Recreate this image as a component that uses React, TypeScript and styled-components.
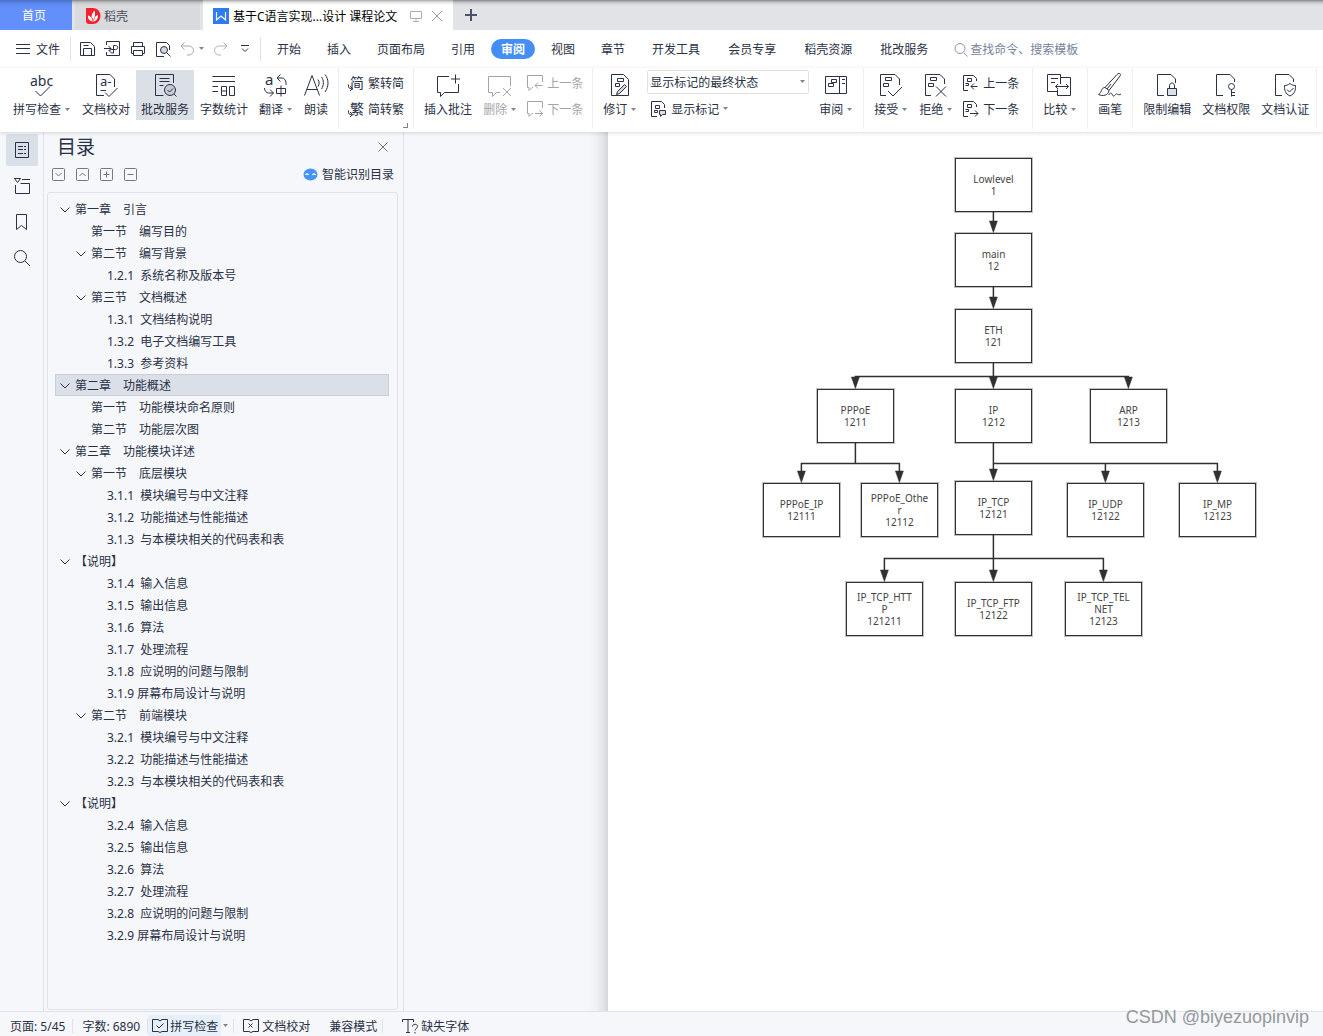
import React from "react";
import styled, { createGlobalStyle, css } from "styled-components";

const ink = "#2a3045";
const line = "#dfe2e8";
const panel = "#f5f7fa";

const Global = createGlobalStyle`
  * { box-sizing: border-box; }
  body { margin: 0; background: ${panel}; }
  body, button, input, select {
    font-family: "Noto Sans", "Noto Sans CJK SC", sans-serif;
    font-size: 12px;
    color: ${ink};
  }
  button { padding: 0; border: 0; background: none; white-space: nowrap; }
  svg { display: block; flex: none; }
`;

const Shell = styled.div`
  display: flex;
  flex-direction: column;
  height: 100vh;
  min-width: 0;
  overflow: hidden;
`;

/* ---------- window tabs ---------- */
const TabBar = styled.header`
  display: flex;
  gap: 3px;
  height: 30px;
  flex: none;
  background: linear-gradient(#858688, #bdbec1 2px, #d8d9dc 4px, #e1e3e7 6px);
`;
const HomeTab = styled.button`
  width: 72px;
  padding-right: 4px;
  color: #fff;
  background: linear-gradient(#4a70c4, #5b88f3 4px, #628ffa 8px);
`;
const FileTab = styled.div<{ $active?: boolean }>`
  display: flex;
  align-items: center;
  gap: ${(p) => (p.$active ? 4 : 3)}px;
  padding: 2px 10px 0;
  width: ${(p) => (p.$active ? 250 : 125)}px;
  color: ${(p) => (p.$active ? "#000" : "#4a4d55")};
  background: ${(p) =>
    p.$active
      ? "linear-gradient(#a5a5a5, #dedede 2px, #f7f7f7 4px, #fff 6px)"
      : "linear-gradient(#858688, #b9babc 2px, #d0d1d4 4px, #d8dadd 6px)"};
`;
const TabTitle = styled.span`
  flex: 1;
  white-space: nowrap;
`;
const TabTools = styled.span`
  display: flex;
  align-items: center;
  gap: 9px;
`;
const AddTab = styled.button`
  width: 30px;
  display: grid;
  place-items: center;
`;

/* ---------- menu row ---------- */
const MenuRow = styled.nav`
  display: flex;
  align-items: center;
  height: 38px;
  flex: none;
  background: #fff;
`;
const FileButton = styled.button`
  display: flex;
  align-items: center;
  gap: 6px;
  padding: 0 10px 0 16px;
  height: 24px;
  border-right: 1px solid ${line};
`;
const QuickTools = styled.div`
  display: flex;
  align-items: center;
  gap: 9px;
  height: 24px;
  padding: 0 7px 0 8px;
  border-right: 1px solid ${line};
  margin-right: 3px;
`;
const QuickButton = styled.button`
  display: flex;
  align-items: center;
  gap: 4px;
`;
const MenuItem = styled.button<{ $wide?: boolean }>`
  padding: 0 ${(p) => (p.$wide ? 14 : 13)}px;
  height: 20px;
`;
const ActiveItem = styled.button`
  width: 44px;
  height: 20px;
  margin: 0 3px;
  border-radius: 10px;
  background: #448ef4;
  color: #fff;
  font-weight: 700;
`;
const Search = styled.label`
  display: flex;
  align-items: center;
  flex: 1;
  gap: 1px;
  padding-left: 12px;
  min-width: 0;
`;
const SearchInput = styled.input`
  border: 0;
  padding: 0;
  flex: 1;
  min-width: 0;
  outline: 0;
  background: transparent;
  &::placeholder { color: #77839b; opacity: 1; }
`;

/* ---------- ribbon ---------- */
const Ribbon = styled.section`
  display: flex;
  height: 64px;
  flex: none;
  padding-left: 3px;
  background: #fff;
  position: relative;
  z-index: 2;
  box-shadow: 0 1px 4px rgba(0, 0, 0, 0.14);
`;
const Group = styled.div<{ $end?: number }>`
  display: flex;
  gap: 1px;
  height: 61px;
  padding: 2px ${(p) => p.$end ?? 5}px 0 5px;
  border-right: 1px solid #eceef1;
  position: relative;
`;
const dim = css`
  color: #a3a5aa;
`;
const BigButton = styled.button<{ $active?: boolean; $off?: boolean }>`
  display: flex;
  flex-direction: column;
  align-items: center;
  height: 50px;
  padding: 1px 5px;
  background: ${(p) => (p.$active ? "#dae0e6" : "transparent")};
  ${(p) => p.$off && dim}
  > svg { margin: 0 -2px; }
`;
const Label = styled.span`
  display: flex;
  align-items: center;
  line-height: 21px;
`;
const Stack = styled.div`
  display: flex;
  flex-direction: column;
`;
const SmallButton = styled.button<{ $off?: boolean }>`
  display: flex;
  align-items: center;
  gap: 4px;
  height: 26px;
  padding: 0 4px;
  ${(p) => p.$off && dim}
`;
const Launcher = styled.span`
  position: absolute;
  right: 5px;
  bottom: 1px;
  width: 5px;
  height: 5px;
  border: solid #7c8496;
  border-width: 0 1px 1px 0;
`;
const SelectBox = styled.div`
  display: flex;
  align-items: center;
  width: 162px;
  height: 24px;
  margin-bottom: 2px;
  padding-right: 2px;
  border: 1px solid ${line};
  border-radius: 2px;
`;
const Select = styled.select`
  appearance: none;
  flex: 1;
  border: 0;
  padding: 0 2px;
  background: transparent;
`;
const MarkupStack = styled(Stack)`
  margin: 0 4px;
`;

/* ---------- main area ---------- */
const Main = styled.main`
  display: flex;
  flex: 1;
  min-height: 0;
`;
const Rail = styled.nav`
  display: flex;
  flex-direction: column;
  gap: 4px;
  width: 44px;
  padding: 2px 5px 0 6px;
  border-right: 1px solid ${line};
`;
const RailButton = styled.button<{ $active?: boolean }>`
  display: grid;
  place-items: center;
  width: 32px;
  height: 32px;
  border-radius: 2px;
  background: ${(p) => (p.$active ? "#dae0e8" : "transparent")};
`;
const Outline = styled.aside`
  display: flex;
  flex-direction: column;
  width: 360px;
  padding: 0 5px 1px 3px;
  border-right: 1px solid ${line};
`;
const OutlineHead = styled.div`
  display: flex;
  justify-content: space-between;
  align-items: center;
  height: 30px;
  padding: 0 10px;
`;
const OutlineTitle = styled.h2`
  margin: 0;
  font-size: 19px;
  line-height: 28px;
  font-weight: 400;
`;
const OutlineTools = styled.div`
  display: flex;
  align-items: center;
  gap: 11px;
  height: 24px;
  padding: 0 4px 0 5px;
  margin-bottom: 6px;
`;
const SmartButton = styled.button`
  display: flex;
  align-items: center;
  gap: 4px;
  margin-left: auto;
`;
const Tree = styled.ul`
  flex: 1;
  min-height: 0;
  margin: 0;
  list-style: none;
  overflow: hidden;
  padding: 5px 8px 0 7px;
  border: 1px solid ${line};
  border-radius: 3px;
`;
const TreeRow = styled.button<{ $level: number; $selected?: boolean }>`
  display: flex;
  align-items: center;
  gap: 5px;
  width: 100%;
  height: 22px;
  padding-left: ${(p) => 5 + p.$level * 16}px;
  white-space: pre;
  background: ${(p) => (p.$selected ? "#dadfe8" : "transparent")};
  box-shadow: ${(p) => (p.$selected ? "inset 0 0 0 1px #c9d0d9" : "none")};
`;
const ChevronSlot = styled.span`
  width: 10px;
`;
const Workspace = styled.div`
  display: flex;
  flex: 1;
  min-width: 0;
`;
const Gutter = styled.div`
  width: 204px;
  flex: none;
  background: linear-gradient(to left, #d3d5d8, #e2e4e7 5px, #eff1f4 12px, ${panel} 20px);
`;
const Page = styled.article`
  flex: 1;
  position: relative;
  overflow: hidden;
  background: #fff;
`;
const Node = styled.div`
  position: absolute;
  display: flex;
  flex-direction: column;
  justify-content: center;
  width: 77px;
  height: 54px;
  padding-bottom: 1px;
  border: 1px solid #303030;
  box-shadow: 0 0 0 1px rgba(48, 48, 48, 0.3);
  background: #fff;
  color: #444;
  font-size: 10px;
  line-height: 12px;
  text-align: center;
`;

/* ---------- status bar ---------- */
const Status = styled.footer`
  display: flex;
  align-items: center;
  height: 25px;
  flex: none;
  padding-top: 3px;
  border-top: 1px solid ${line};
  background: ${panel};
  position: relative;
`;
const StatusItem = styled.button<{ $line?: boolean; $left?: number; $right?: number }>`
  display: flex;
  align-items: center;
  gap: 3px;
  height: 14px;
  padding: 0 ${(p) => p.$right ?? 7}px 0 ${(p) => p.$left ?? 9}px;
  border-right: 1px solid ${(p) => (p.$line ? line : "transparent")};
`;
const SpellToggle = styled.button`
  display: flex;
  align-items: center;
  gap: 2px;
  height: 22px;
  padding: 0 3px 0 4px;
  background: #e6f0fb;
`;
const Watermark = styled.span`
  position: absolute;
  right: 14px;
  bottom: 8px;
  font-family: "Liberation Sans", Arial, sans-serif;
  font-size: 18px;
  line-height: 22px;
  color: #96989b;
`;

/* ---------- icons ---------- */
type IconProps = { w?: number; h?: number; c?: string; children: React.ReactNode };
const Icon = ({ w = 28, h, c = "currentColor", children }: IconProps) => (
  <svg width={w} height={h ?? w} viewBox={`0 0 ${w} ${h ?? w}`} fill="none" stroke={c} aria-hidden="true">
    {children}
  </svg>
);
const Glyph = ({ x, y, size, children }: { x: number; y: number; size: number; children: string }) => (
  <text x={x} y={y} fontSize={size} fill="currentColor" stroke="none">{children}</text>
);
const Caret = ({ lead = true }: { lead?: boolean }) => (
  <svg width={lead ? 10 : 7} height="4" viewBox={lead ? "-3 0 10 4" : "0 0 7 4"} aria-hidden="true">
    <path d="M1 0h5L3.500 3z" fill="#7c8496" />
  </svg>
);
const marks = <path d="M8.500 6.500h6v3h-6zM6.500 12.500h5v3h-5z" />;
const bigIcons: Record<string, React.ReactNode> = {
  spell: <><Glyph x={2} y={15} size={14}>abc</Glyph><path d="M7.500 20l5 5 9.500-9.500" /></>,
  proof: <><path d="M12 24.500H4.500v-21H18L22.500 8v8M8.500 19.500H14M13 21.500l4 4 8.500-8.500" /><Glyph x={8} y={15} size={13}>a-</Glyph></>,
  review: <><path d="M12.500 24.500h-8v-21h18V12M8.500 7.500h10M8.500 10.500h10M8.500 14.500h4" /><circle cx="19" cy="19" r="5.500" fill="#c5cbd4" /><path d="M23 23l2.500 2.500M16.500 19l2 2 3.500-3.500" /></>,
  count: <path d="M2.500 5.500H25M2.500 10.500H25M2.500 15.500H8M2.500 20.500H8M11.500 15.500h5v9h-5zM11.500 20h5M19.500 15.500h5v9h-5z" />,
  translate: <><Glyph x={3} y={14} size={15}>a</Glyph><path d="M18.500 3.500L15 7l3.500 3.500M15 7h5c2 0 4 2 4 5v2M2.500 17c0 3 2 5 4 5h5M8 18.500l3.500 3.500L8 25.500M14.500 17.500h9v5h-9zM19 14.500v11" /></>,
  read: <path d="M2.500 24.500l7.500-20 7.500 20M5 18.500h10.500M16 8.500c1.500 2 1.500 5 0 7M19.500 6c2.500 3 2.500 8.500 0 12M23 3.500c4 5 4 12 0 17.500" />,
  comment: <path d="M15 5.500H3.500v16h3v4l4-4h14V13M21.500 3.500v9M17 8h9" />,
  remove: <path d="M14 21.500h-3.500l-4 4v-4h-4v-16h22V15M17 17l8 8M25 17l-8 8" />,
  revise: <><path d="M5.500 3.500h12l5 5v16h-17z" /><path d="M11.500 7.500h6v3h-6zM9.500 12.500h4v3h-4z" /><path d="M18.500 13.500l2 2-7 7-3 1 1-3z" fill="#d4d8de" /></>,
  pane: <><path d="M3.500 5.500h21v17h-21zM17.500 5.500v17M20 8.500h3M20 12.500h3" /><path d="M9.500 8.500h5v3h-5zM6.500 12.500h5v3h-5z" /></>,
  accept: <><path d="M9 24.500H3.500v-21H18L22.500 8v6M11 20l5 5 9-9" />{marks}</>,
  reject: <><path d="M9 24.500H3.500v-21H18L22.500 8v5M14 15.500l10 10M24 15.500l-10 10" />{marks}</>,
  compare: <path d="M11.500 20.500h-10v-17h13v3M5 7.500h7M5 11.500h4M14.500 6.500h10v18h-13v-6M14.500 6.500V13M9.500 15.500h13M12 13l-2.500 2.500L12 18M20 13l2.500 2.500L20 18" />,
  pen: <path d="M9 16.500L21 3.500c2-2 4.500-1 3 1.500L13 19.500zM9 16.500c-4 0-3 5-6.500 7 4 2 10 1 10.500-4M11 18l4-5M12.500 24c2-2.500 3-2.500 4 0s2.500 0 3.500-1 2 2 5 0" />,
  limit: <><path d="M11 24.500H4.500v-21H18L22.500 8v4M16.500 18v-3c0-4 5-4 5 0v3" /><path d="M14.500 17.500h9v7h-9z" fill="#dcdfe4" /></>,
  rights: <><path d="M11 24.500H4.500v-21H18L22.500 8v3" /><circle cx="19.500" cy="15.500" r="3" /><path d="M19.500 18.500v7M19.500 21.500H23M19.500 24.500H23" /></>,
  cert: <><path d="M11 24.500H4.500v-21H18L22.500 8v3M19 12.500c2 1.500 3.500 2 5.500 2 0 5-.5 8-5.500 10.500-5-2.500-5.500-5.500-5.500-10.500 2 0 3.500-.5 5.500-2zM16 18.500l2.500 2.500 4-4" /></>,
};

const Big = ({ icon, label, caret, active, off }: { icon: string; label: string; caret?: boolean; active?: boolean; off?: boolean }) => (
  <BigButton $active={active} $off={off} disabled={off}>
    <Icon>{bigIcons[icon]}</Icon>
    <Label>{label}{caret && <Caret />}</Label>
  </BigButton>
);

const bubblePrev = <path d="M6 12.500H5l-3 3v-3H.5V.5h15V7M15.500 10.500H8M11 7.500l-3 3 3 3" />;
const bubbleNext = <path d="M6 12.500H5l-3 3v-3H.5V.5h15V7M8 12.500h7.500M12.500 9.500l3 3-3 3" />;
const docPrev = <path d="M5 15.500H.5V.5h10l3 3V6M4.500 3.500h4v3h-4zM2.500 8.500h3v2h-3M14.500 11.500H8M11 8.500l-3 3 3 3" />;
const docNext = <path d="M5 15.500H.5V.5h10l3 3V6M4.500 3.500h4v3h-4zM2.500 8.500h3v2h-3M7 12.500h8M12 9.500l3 3-3 3" />;
const docTag = <><path d="M6 15.500H.5V.5h10l3 3V7M4.500 4.500h4v3h-4zM3.500 9.500h3v2h-3z" /><path d="M8.500 9.500h6v4h-3l-2 2v-2h-1z" fill="#dcdfe4" /></>;

const Small = ({ icon, label, off, caret }: { icon: React.ReactNode; label: string; off?: boolean; caret?: boolean }) => (
  <SmallButton $off={off} disabled={off}>
    <Icon w={16}>{icon}</Icon>
    <Label>{label}{caret && <Caret />}</Label>
  </SmallButton>
);
const convertArrow = <path d="M.5 9.500v2c0 1 .5 2 3 2M2 11l2.500 2.500L2 16" />;

/* ---------- data ---------- */
type Entry = [level: number, text: string, open?: boolean];
const entries: Entry[] = [
  [0, "第一章　引言", true],
  [1, "第一节　编写目的"],
  [1, "第二节　编写背景", true],
  [2, "1.2.1  系统名称及版本号"],
  [1, "第三节　文档概述", true],
  [2, "1.3.1  文档结构说明"],
  [2, "1.3.2  电子文档编写工具"],
  [2, "1.3.3  参考资料"],
  [0, "第二章　功能概述", true],
  [1, "第一节　功能模块命名原则"],
  [1, "第二节　功能层次图"],
  [0, "第三章　功能模块详述", true],
  [1, "第一节　底层模块", true],
  [2, "3.1.1  模块编号与中文注释"],
  [2, "3.1.2  功能描述与性能描述"],
  [2, "3.1.3  与本模块相关的代码表和表"],
  [0, "【说明】", true],
  [2, "3.1.4  输入信息"],
  [2, "3.1.5  输出信息"],
  [2, "3.1.6  算法"],
  [2, "3.1.7  处理流程"],
  [2, "3.1.8  应说明的问题与限制"],
  [2, "3.1.9 屏幕布局设计与说明"],
  [1, "第二节　前端模块", true],
  [2, "3.2.1  模块编号与中文注释"],
  [2, "3.2.2  功能描述与性能描述"],
  [2, "3.2.3  与本模块相关的代码表和表"],
  [0, "【说明】", true],
  [2, "3.2.4  输入信息"],
  [2, "3.2.5  输出信息"],
  [2, "3.2.6  算法"],
  [2, "3.2.7  处理流程"],
  [2, "3.2.8  应说明的问题与限制"],
  [2, "3.2.9 屏幕布局设计与说明"],
];

const nodes: [x: number, y: number, lines: string[]][] = [
  [347, 26, ["Lowlevel", "1"]],
  [347, 101, ["main", "12"]],
  [347, 177, ["ETH", "121"]],
  [209, 257, ["PPPoE", "1211"]],
  [347, 257, ["IP", "1212"]],
  [482, 257, ["ARP", "1213"]],
  [155, 351, ["PPPoE_IP", "12111"]],
  [253, 351, ["PPPoE_Othe", "r", "12112"]],
  [347, 349, ["IP_TCP", "12121"]],
  [459, 351, ["IP_UDP", "12122"]],
  [571, 351, ["IP_MP", "12123"]],
  [238, 450, ["IP_TCP_HTT", "P", "121211"]],
  [347, 450, ["IP_TCP_FTP", "12122"]],
  [457, 450, ["IP_TCP_TEL", "NET", "12123"]],
];
const arrowTips: [number, number][] = [
  [385, 101], [385, 177], [247, 257], [385, 257], [520, 257],
  [193, 351], [291, 351], [385, 349], [497, 351], [609, 351],
  [276, 450], [385, 450], [495, 450],
];
const Connectors = () => (
  <svg width="700" height="520" viewBox="0 0 700 520" fill="none" stroke="#303030" strokeWidth="1.500" aria-hidden="true">
    <g transform="translate(.4 0)">
      <path d="M385 80v18M385 155v18M385 231v20M247 252v-7.500h273v7.500M385 311v32M385 331.500h224V346M497 331.500V346M247 311v20.500M193 346v-14.500h98V346M385 403v42M276 445v-18.500h219V445" />
      {arrowTips.map(([x, y]) => (
        <path key={`${x}-${y}`} d={`M${x - 4} ${y - 12}h8l-4 11.500z`} fill="#303030" strokeWidth=".5" />
      ))}
    </g>
  </svg>
);

export default function App() {
  return (
    <Shell>
      <Global />
      <TabBar>
        <HomeTab>首页</HomeTab>
        <FileTab>
          <svg width="16" height="16" viewBox="0 0 16 16" aria-hidden="true">
            <path d="M1 0h7a7.500 8 0 010 16H4a3 3 0 01-3-3z" fill="#f5222d" />
            <path d="M8 13.500C4.500 13 2.500 10.500 3 7.500c2 .5 3.500 2 4 3.500C6 8 7 5 9.500 2.500c1 3 .5 5.500-.5 8 .5-1.500 2-3 4-3.500 0 3.500-1.500 6-5 6.500z" fill="#fff" />
            <path d="M7.500 13V10M8.500 12.500l1-3" stroke="#f5222d" strokeWidth=".7" />
          </svg>
          <TabTitle>稻壳</TabTitle>
        </FileTab>
        <FileTab $active>
          <svg width="16" height="16" viewBox="0 0 16 16" aria-hidden="true">
            <path d="M0 0h16v16H0z" fill="#2f7af0" />
            <path d="M3.500 4v8L8 8l4.500 4V4" fill="none" stroke="#fff" strokeWidth="1.200" />
          </svg>
          <TabTitle>基于C语言实现...设计 课程论文</TabTitle>
          <TabTools>
            <Icon w={12} c="#a9b0c2"><path d="M.5 1.500h11v7H.5zM6 8.500v3M3 11.500h6" /></Icon>
            <Icon w={12} c="#949cb4"><path d="M1 1l10 10M11 1L1 11" /></Icon>
          </TabTools>
        </FileTab>
        <AddTab aria-label="新建">
          <Icon w={12} c="#4b5268"><path d="M6 0v12M0 6h12" strokeWidth="2" /></Icon>
        </AddTab>
      </TabBar>

      <MenuRow>
        <FileButton>
          <Icon w={14} h={10}><path d="M0 .5h14M0 4.500h14M0 9.500h14" /></Icon>
          文件
        </FileButton>
        <QuickTools>
          <QuickButton aria-label="保存"><Icon w={16}><path d="M1.500 1.500h10l4 4v9h-14zM4.500 14V7.500h8V14M4.500 4.500h5" /></Icon></QuickButton>
          <QuickButton aria-label="输出为PDF"><Icon w={17} h={16}><path d="M2.500 4V.5h13v14h-13V11M0 7.500h7M4.500 5L7 7.500 4.500 10M9.500 12V4.500h2c3 0 3 4 0 4h-4c-3 0-2 4 2 3.500" /></Icon></QuickButton>
          <QuickButton aria-label="打印"><Icon w={16}><path d="M3.500 5V1.500h9V5M3.500 12.500h-2v-7h13v7h-2M3.500 9.500h9v5h-9z" /></Icon></QuickButton>
          <QuickButton aria-label="打印预览"><Icon w={16}><path d="M9 15.500H1.500v-14h10l3 3V9" /><circle cx="9" cy="9" r="3.500" fill="#d4d8de" /><path d="M11.500 11.500l4 4" /></Icon></QuickButton>
          <QuickButton aria-label="撤销"><Icon w={14} c="#a5a8b0"><path d="M4.500.5L1 4l3.500 3.500M1 4h8a4.500 4.500 0 010 9H7" /></Icon><Caret lead={false} /></QuickButton>
          <QuickButton aria-label="恢复"><Icon w={14} c="#b0b2b8"><path d="M9.500.5L13 4 9.500 7.500M13 4H5a4.500 4.500 0 000 9h2" /></Icon></QuickButton>
          <QuickButton aria-label="自定义"><Icon w={16} h={8}><path d="M4 .5h8M5 3.500l3 3 3-3" /></Icon></QuickButton>
        </QuickTools>
        <MenuItem>开始</MenuItem>
        <MenuItem>插入</MenuItem>
        <MenuItem>页面布局</MenuItem>
        <MenuItem>引用</MenuItem>
        <ActiveItem>审阅</ActiveItem>
        <MenuItem>视图</MenuItem>
        <MenuItem>章节</MenuItem>
        <MenuItem $wide>开发工具</MenuItem>
        <MenuItem $wide>会员专享</MenuItem>
        <MenuItem $wide>稻壳资源</MenuItem>
        <MenuItem $wide>批改服务</MenuItem>
        <Search>
          <Icon w={15} c="#8b95a9"><circle cx="6" cy="6.500" r="5" /><path d="M9.500 10.500l4 4" /></Icon>
          <SearchInput aria-label="查找命令" placeholder="查找命令、搜索模板" />
        </Search>
      </MenuRow>

      <Ribbon>
        <Group>
          <Big icon="spell" label="拼写检查" caret />
          <Big icon="proof" label="文档校对" />
          <Big icon="review" label="批改服务" active />
          <Big icon="count" label="字数统计" />
          <Big icon="translate" label="翻译" caret />
          <Big icon="read" label="朗读" />
        </Group>
        <Group>
          <Stack>
            <Small label="繁转简" icon={<>{convertArrow}<Glyph x={2} y={13} size={14}>简</Glyph></>} />
            <Small label="简转繁" icon={<>{convertArrow}<Glyph x={2} y={13} size={14}>繁</Glyph></>} />
          </Stack>
          <Launcher />
        </Group>
        <Group>
          <Big icon="comment" label="插入批注" />
          <Big icon="remove" label="删除" caret off />
          <Stack>
            <Small label="上一条" icon={bubblePrev} off />
            <Small label="下一条" icon={bubbleNext} off />
          </Stack>
        </Group>
        <Group>
          <Big icon="revise" label="修订" caret />
          <MarkupStack>
            <SelectBox>
              <Select aria-label="标记显示状态"><option>显示标记的最终状态</option></Select>
              <Caret lead={false} />
            </SelectBox>
            <Small label="显示标记" icon={docTag} caret />
          </MarkupStack>
          <Big icon="pane" label="审阅" caret />
        </Group>
        <Group $end={9}>
          <Big icon="accept" label="接受" caret />
          <Big icon="reject" label="拒绝" caret />
          <Stack>
            <Small label="上一条" icon={docPrev} />
            <Small label="下一条" icon={docNext} />
          </Stack>
        </Group>
        <Group><Big icon="compare" label="比较" caret /></Group>
        <Group><Big icon="pen" label="画笔" /></Group>
        <Group $end={2}>
          <Big icon="limit" label="限制编辑" />
          <Big icon="rights" label="文档权限" />
          <Big icon="cert" label="文档认证" />
        </Group>
      </Ribbon>

      <Main>
        <Rail>
          <RailButton $active aria-label="目录"><Icon w={16}><path d="M1.500.5h13v15h-13zM4 4.500h5M10 4.500h2M4 7.500h5M10 7.500h2M4 11.500h5M10 11.500h2" /></Icon></RailButton>
          <RailButton aria-label="章节"><Icon w={16}><path d="M8 1.500h8M.5.500h6l-3 4zM1.500 7v8.500h14v-10h-9" /></Icon></RailButton>
          <RailButton aria-label="书签"><Icon w={16}><path d="M2.500.5h10v15l-5-4-5 4z" /></Icon></RailButton>
          <RailButton aria-label="查找"><Icon w={18}><circle cx="7.500" cy="7.500" r="6" /><path d="M12 12l5 5" /></Icon></RailButton>
        </Rail>
        <Outline>
          <OutlineHead>
            <OutlineTitle>目录</OutlineTitle>
            <button aria-label="关闭"><Icon w={10} c="#6d7587"><path d="M.5.500l9 9M9.500.500l-9 9" /></Icon></button>
          </OutlineHead>
          <OutlineTools>
            <button aria-label="展开"><Icon w={13} c="#777"><rect x=".5" y=".5" width="12" height="12" rx="1" /><path d="M3.500 5l3 3 3-3" /></Icon></button>
            <button aria-label="收起"><Icon w={13} c="#777"><rect x=".5" y=".5" width="12" height="12" rx="1" /><path d="M3.500 8l3-3 3 3" /></Icon></button>
            <button aria-label="增加级别"><Icon w={13} c="#777"><rect x=".5" y=".5" width="12" height="12" rx="1" /><path d="M3.500 6.500h6M6.500 3.500v6" /></Icon></button>
            <button aria-label="减少级别"><Icon w={13} c="#777"><rect x=".5" y=".5" width="12" height="12" rx="1" /><path d="M3.500 6.500h6" /></Icon></button>
            <SmartButton>
              <Icon w={15} h={13} c="#fff"><ellipse cx="7.500" cy="6.500" rx="7" ry="6" fill="#4593f5" stroke="none" /><path d="M2.500 7c.5-1.500 2-1.500 3 0M9.500 7c1-1.500 2.500-1.500 3 0" strokeWidth="1.300" /></Icon>
              智能识别目录
            </SmartButton>
          </OutlineTools>
          <Tree>
            {entries.map(([level, text, open], i) => (
              <li key={i}>
                <TreeRow $level={level} $selected={i === 8}>
                  <ChevronSlot>{open && <Icon w={10} h={7}><path d="M.5 1.500L5 6l4.500-4.500" /></Icon>}</ChevronSlot>
                  {text}
                </TreeRow>
              </li>
            ))}
          </Tree>
        </Outline>
        <Workspace>
          <Gutter />
          <Page>
            <Connectors />
            {nodes.map(([x, y, lines]) => (
              <Node key={`${x}-${y}`} style={{ left: x, top: y }}>
                {lines.map((t, i) => <span key={i}>{t}</span>)}
              </Node>
            ))}
          </Page>
        </Workspace>
      </Main>

      <Status>
        <StatusItem $line $left={10}>页面: 5/45</StatusItem>
        <StatusItem $line>字数: 6890</StatusItem>
        <SpellToggle>
          <Icon w={16} h={14}><path d="M6 .5H.5v12H6l2 1 2-1h5.500V.5H10L8 2 6 .5M4.500 6.500L7 9l4.500-4.500" /></Icon>
          拼写检查
        </SpellToggle>
        <StatusItem $line $left={1} $right={4}><Caret lead={false} /></StatusItem>
        <StatusItem $right={9}>
          <Icon w={16} h={14}><path d="M6 .5H.5v12H6l2 1 2-1h5.500V.5H10L8 2 6 .5M5.500 4.500l4 4M9.500 4.500l-4 4" /></Icon>
          文档校对
        </StatusItem>
        <StatusItem $line $right={5}>兼容模式</StatusItem>
        <StatusItem $left={19}>
          <Icon w={16}><path d="M.5 4V1.500h11V4M6 1.500v13M4 14.500h4" /><path d="M10.500 8.500c0-3 5-3 5 0 0 2-2.500 2-2.500 4M13 14v1.500" /></Icon>
          缺失字体
        </StatusItem>
        <Watermark>CSDN @biyezuopinvip</Watermark>
      </Status>
    </Shell>
  );
}
